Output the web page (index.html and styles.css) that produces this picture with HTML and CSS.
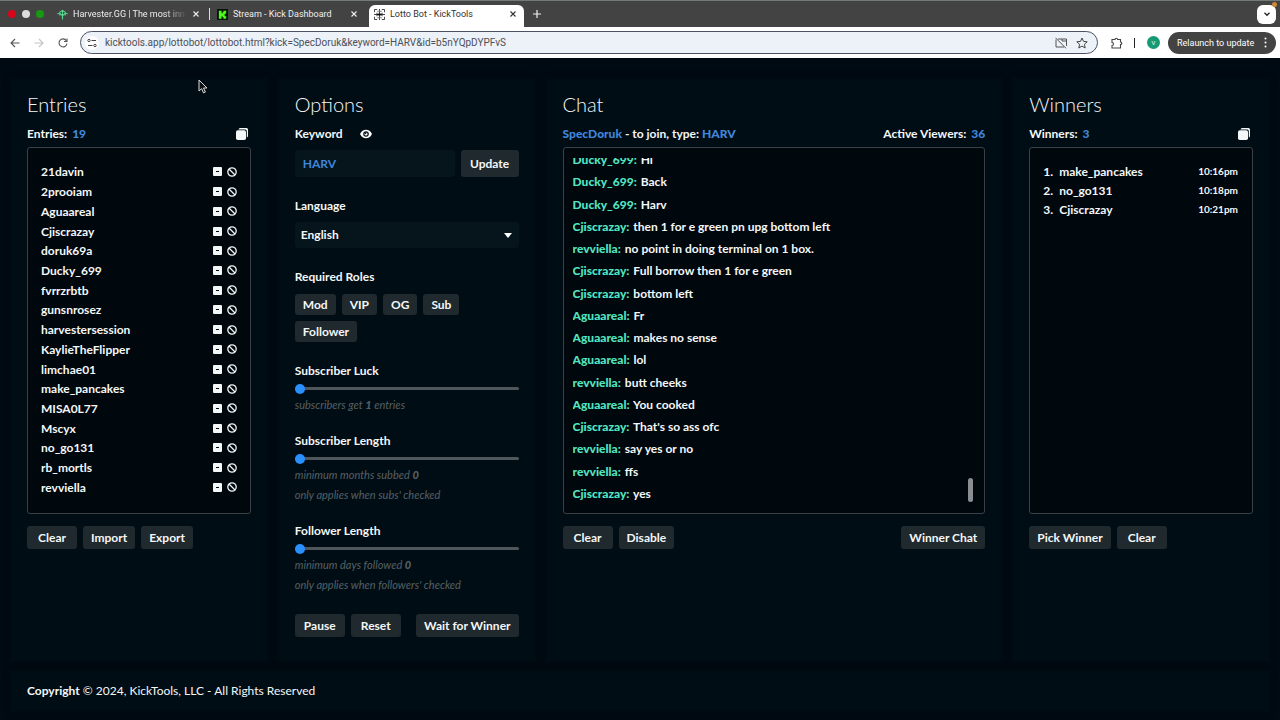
FILE: index.html
```html
<!DOCTYPE html>
<html lang="en">

<head>
    <meta charset="UTF-8">
    <meta name="viewport" content="width=device-width, initial-scale=1">
    <title>Lotto Bot - KickTools</title>
    <link rel="stylesheet" href="styles.css">
</head>

<body>
    <svg class="defs" width="0" height="0" aria-hidden="true">
        <symbol id="close" viewBox="0 0 8 8"><path d="M1.500 1.500l5 5M6.500 1.500l-5 5" fill="none" stroke="currentColor" stroke-width="1.100"/></symbol>
        <symbol id="copy" viewBox="0 0 12 12"><path d="M4 0h6.500a1.500 1.500 0 0 1 1.500 1.500V8a1.500 1.500 0 0 1-1.200 1.500V3a1.500 1.500 0 0 0-1.500-1.500H2.600A1.500 1.500 0 0 1 4 0z" fill="currentColor"/><rect y="2.200" width="10" height="9.800" rx="1.800" fill="currentColor"/></symbol>
        <symbol id="minus" viewBox="0 0 9 9"><rect width="9" height="9" rx="1" fill="currentColor"/><path d="M3 4.500h3" stroke="#00070d"/></symbol>
        <symbol id="ban" viewBox="0 0 10 10"><circle cx="5" cy="5" r="4.200" fill="none" stroke="currentColor" stroke-width="1.300"/><path d="M2 2l6 6" stroke="currentColor" stroke-width="1.300"/></symbol>
    </svg>

    <header class="browser">
        <div class="tabstrip">
            <div class="lights"><span class="red"></span><span class="white"></span><span class="green"></span></div>
            <div class="tab">
                <svg class="favicon" viewBox="0 0 12 12"><path d="M6 1.500v10M.5 5.500L6 1.500l5.500 4M3 7V4.500L6 7.500l3-3V7" fill="none" stroke="#55d68c" stroke-width="1.200"/></svg>
                <span class="tab-title fade">Harvester.GG | The most inno</span>
                <button class="icon-btn" aria-label="Close tab"><svg width="8" height="8"><use href="#close"/></svg></button>
            </div>
            <div class="tab divided">
                <svg class="favicon" viewBox="0 0 12 12"><rect width="12" height="12" fill="#041405"/><path d="M2 2h3v2.500h1V3.500h1V2h3v3H9v1H8v1h1v1h1v2.500H7V9H6V8H5v2.500H2z" fill="#4dfb1b"/></svg>
                <span class="tab-title">Stream - Kick Dashboard</span>
                <button class="icon-btn" aria-label="Close tab"><svg width="8" height="8"><use href="#close"/></svg></button>
            </div>
            <div class="tab active">
                <svg class="favicon" viewBox="0 0 12 12"><path d="M.5 3.500v-3h3M8.500.5h3v3M.5 8.500v3h3M8.500 11.500h3v-3M6 0v12M0 6h12" fill="none" stroke="#333"/><path d="M3 4v4M9 4v4M3.500 2.500h5M3.500 9.500h5" fill="none" stroke="#777"/><path d="M3 6h6" stroke="#111" stroke-width="2"/></svg>
                <span class="tab-title">Lotto Bot - KickTools</span>
                <button class="icon-btn" aria-label="Close tab"><svg width="8" height="8"><use href="#close"/></svg></button>
            </div>
            <button class="icon-btn new-tab" aria-label="New tab"><svg width="8" height="8" viewBox="0 0 8 8"><path d="M4 0v8M0 4h8" stroke="currentColor" stroke-width="1.200"/></svg></button>
            <button class="tab-search" aria-label="Search tabs"><svg width="8" height="8" viewBox="0 0 8 8"><path d="M1.500 2.800L4 5.300l2.500-2.500" fill="none" stroke="#222" stroke-width="1.300"/></svg></button>
            <span class="notice"></span>
        </div>
        <div class="toolbar">
            <button class="icon-btn nav" aria-label="Back"><svg width="10" height="10" viewBox="0 0 10 10"><path d="M9.500 5H1M5 1L1 5l4 4" fill="none" stroke="#555" stroke-width="1.100"/></svg></button>
            <button class="icon-btn nav" aria-label="Forward"><svg width="10" height="10" viewBox="0 0 10 10"><path d="M.5 5H9M5 1l4 4-4 4" fill="none" stroke="#c4c4c4" stroke-width="1.100"/></svg></button>
            <button class="icon-btn nav" aria-label="Reload"><svg width="10" height="10" viewBox="0 0 10 10"><path d="M8.300 2.600A4 4 0 1 0 9 5.500M9 .5v3H6" fill="none" stroke="#555" stroke-width="1.100"/></svg></button>
            <div class="address">
                <span class="site"><svg width="10" height="10" viewBox="0 0 10 10"><path d="M4.500 2.500H9M1 7.500h4.500" stroke="#444" stroke-width="1.100"/><circle cx="2" cy="2.500" r="1.200" fill="none" stroke="#444"/><circle cx="8" cy="7.500" r="1.200" fill="none" stroke="#444"/></svg></span>
                <input class="url" type="text" aria-label="Address" value="kicktools.app/lottobot/lottobot.html?kick=SpecDoruk&amp;keyword=HARV&amp;id=b5nYQpDYPFvS">
                <svg width="12" height="12" viewBox="0 0 12 12"><path d="M3 2h8.500v7M9 10H1V2.500M.5.800l10.500 10.500M7 2v2h4" fill="none" stroke="#555"/></svg>
                <svg width="12" height="12" viewBox="0 0 12 12"><path d="M6 1l1.500 3.400 3.700.4-2.800 2.500.8 3.700L6 9.100 2.800 11l.8-3.700L.8 4.800l3.700-.4z" fill="none" stroke="#444"/></svg>
            </div>
            <svg class="puzzle" width="12" height="12" viewBox="0 0 12 12"><path d="M1 2.500h3a1.300 1.300 0 0 1 2.600 0H9.500V5a1.300 1.300 0 0 1 0 2.600v3.400H1V8.500a1.500 1.500 0 0 0 0-3z" fill="none" stroke="#444" stroke-width="1.100"/></svg>
            <span class="bar"></span>
            <span class="avatar">V</span>
            <button class="relaunch">Relaunch to update <svg width="3" height="11" viewBox="0 0 3 11"><g fill="#fff"><circle cx="1.500" cy="1.500" r="1"/><circle cx="1.500" cy="5.500" r="1"/><circle cx="1.500" cy="9.500" r="1"/></g></svg></button>
        </div>
    </header>

    <main class="panels">
        <section class="panel">
            <h2>Entries</h2>
            <div class="subhead">
                <span>Entries: <b class="count">19</b></span>
                <button class="icon-btn copy" aria-label="Copy entries"><svg width="12" height="12"><use href="#copy"/></svg></button>
            </div>
            <ul class="box entries" id="entries"></ul>
            <div class="actions">
                <button class="btn">Clear</button>
                <button class="btn">Import</button>
                <button class="btn">Export</button>
            </div>
        </section>

        <section class="panel">
            <h2>Options</h2>
            <div class="field">
                <div class="label-row">
                    <label for="keyword">Keyword</label>
                    <button class="icon-btn" aria-label="Hide keyword"><svg width="12" height="10" viewBox="0 0 12 10"><path d="M0 5C1.500 2 3.500.8 6 .8S10.500 2 12 5C10.500 8 8.500 9.200 6 9.200S1.500 8 0 5z" fill="#fff"/><circle cx="6" cy="5" r="2.800" fill="#010e15"/><circle cx="6" cy="5" r="1.600" fill="#fff"/><circle cx="5.500" cy="4.400" r=".8" fill="#010e15"/></svg></button>
                </div>
                <div class="keyword-row">
                    <input class="text" id="keyword" type="text" value="HARV">
                    <button class="btn">Update</button>
                </div>
            </div>
            <div class="field">
                <label for="language">Language</label>
                <div class="select">
                    <select id="language">
                        <option>English</option>
                    </select>
                    <svg width="8" height="5" viewBox="0 0 8 5"><path d="M0 0h8L4 5z" fill="#fff"/></svg>
                </div>
            </div>
            <div class="field">
                <span class="label">Required Roles</span>
                <div class="roles">
                    <button class="btn">Mod</button>
                    <button class="btn">VIP</button>
                    <button class="btn">OG</button>
                    <button class="btn">Sub</button>
                    <button class="btn">Follower</button>
                </div>
            </div>
            <div class="slider">
                <label for="luck">Subscriber Luck</label>
                <input id="luck" type="range" min="1" max="10" value="1">
                <p>subscribers get <b>1</b> entries</p>
            </div>
            <div class="slider">
                <label for="subLength">Subscriber Length</label>
                <input id="subLength" type="range" min="0" max="12" value="0">
                <p>minimum months subbed <b>0</b></p>
                <p>only applies when subs' checked</p>
            </div>
            <div class="slider">
                <label for="followLength">Follower Length</label>
                <input id="followLength" type="range" min="0" max="90" value="0">
                <p>minimum days followed <b>0</b></p>
                <p>only applies when followers' checked</p>
            </div>
            <div class="actions options-actions">
                <button class="btn">Pause</button>
                <button class="btn">Reset</button>
                <button class="btn last">Wait for Winner</button>
            </div>
        </section>

        <section class="panel">
            <h2>Chat</h2>
            <div class="subhead">
                <span><b class="name">SpecDoruk</b> - to join, type: <b class="name">HARV</b></span>
                <span>Active Viewers: <b class="count">36</b></span>
            </div>
            <div class="box chat">
                <div class="messages">
                    <ul id="messages"></ul>
                </div>
                <span class="thumb"></span>
            </div>
            <div class="actions">
                <button class="btn">Clear</button>
                <button class="btn">Disable</button>
                <button class="btn last">Winner Chat</button>
            </div>
        </section>

        <section class="panel">
            <h2>Winners</h2>
            <div class="subhead">
                <span>Winners: <b class="count">3</b></span>
                <button class="icon-btn copy" aria-label="Copy winners"><svg width="12" height="12"><use href="#copy"/></svg></button>
            </div>
            <ol class="box winners">
                <li><span>1.</span> make_pancakes <time>10:16pm</time></li>
                <li><span>2.</span> no_go131 <time>10:18pm</time></li>
                <li><span>3.</span> Cjiscrazay <time>10:21pm</time></li>
            </ol>
            <div class="actions">
                <button class="btn">Pick Winner</button>
                <button class="btn">Clear</button>
            </div>
        </section>
    </main>

    <footer class="footer"><b>Copyright</b> © 2024, KickTools, LLC - All Rights Reserved</footer>

    <svg class="pointer" width="10" height="15" viewBox="0 0 10 15"><path d="M1 1v11l2.600-2.300 1.900 4.200 1.900-.9-1.900-4H9z" fill="#111" stroke="#ddd"/></svg>

    <script src="script.js"></script>
</body>

</html>
```
FILE: styles.css
```css
* {
    box-sizing: border-box;
}
body {
    margin: 0;
    min-height: 100vh;
    display: flex;
    flex-direction: column;
    background: #000a12;
    color: #f4f7f8;
    font: 700 12px/20px Lato, sans-serif;
}
h2, p, ul, ol {
    margin: 0;
    padding: 0;
    list-style: none;
}
button, input, select {
    font: inherit;
    color: inherit;
    border: 0;
    margin: 0;
    padding: 0;
    background: none;
}
.defs {
    position: absolute;
}
.icon-btn {
    display: flex;
    align-items: center;
    justify-content: center;
    flex: none;
}

/* browser */
.browser {
    font: 400 9px/12px Roboto, sans-serif;
}
.tabstrip {
    position: relative;
    display: flex;
    align-items: center;
    height: 27px;
    padding: 0 4px 0 8px;
    background: #434343;
    border-top: 1px solid #737a78;
    color: #eee;
}
.lights {
    display: flex;
    gap: 6px;
    width: 44px;
}
.lights span {
    width: 8px;
    height: 8px;
    border-radius: 50%;
}
.red {
    background: #d8061b;
}
.white {
    background: #dcdcdc;
}
.green {
    background: #159a12;
}
.tab {
    display: flex;
    align-items: center;
    gap: 5px;
    width: 157px;
    padding: 0 9px 0 5px;
}
.favicon {
    width: 11px;
    height: 11px;
    flex: none;
}
.tab-title {
    flex: 1;
    overflow: hidden;
    white-space: nowrap;
}
.fade {
    mask-image: linear-gradient(to right, #000 80%, transparent);
}
.divided {
    width: 160px;
    border-left: 1px solid #ddd;
    height: 12px;
    padding: 0 11px 0 7px;
}
.active {
    align-self: flex-end;
    width: 155px;
    height: 22px;
    padding: 0 7px 4px 5px;
    background: #fff;
    border-radius: 6px 6px 0 0;
    color: #333;
}
.new-tab {
    margin-left: 9px;
}
.tab-search {
    display: flex;
    align-items: center;
    justify-content: center;
    width: 19px;
    height: 19px;
    margin-left: auto;
    border-radius: 6px;
    background: #fff;
}
.notice {
    position: absolute;
    top: 1px;
    right: 3px;
    width: 5px;
    height: 5px;
    border-radius: 50%;
    background: #c98a3a;
}
.toolbar {
    display: flex;
    align-items: center;
    height: 31px;
    padding: 0 4px 0 10px;
    background: #fff;
}
.nav {
    width: 10px;
    margin-right: 14px;
}
.address {
    display: flex;
    align-items: center;
    gap: 9px;
    flex: 1;
    height: 23px;
    margin-left: -2px;
    padding: 0 9px 0 4px;
    border: 1px solid #4a5361;
    border-radius: 12px;
    background: #edf1f8;
}
.site {
    display: flex;
    align-items: center;
    justify-content: center;
    width: 14px;
    height: 14px;
    margin-right: -3px;
    border-radius: 50%;
    background: #fff;
}
.url {
    flex: 1;
    font-size: 10px;
    color: #4c5058;
    outline: none;
}
.puzzle {
    margin-left: 13px;
}
.bar {
    width: 1px;
    height: 10px;
    margin: 0 12px 0 11px;
    background: #222;
}
.avatar {
    width: 13px;
    height: 13px;
    border-radius: 50%;
    background: #169a74;
    color: #fff;
    font-size: 6px;
    line-height: 13px;
    text-align: center;
}
.relaunch {
    display: flex;
    align-items: center;
    justify-content: space-between;
    width: 108px;
    height: 22px;
    margin-left: 8px;
    padding: 0 9px;
    border-radius: 11px;
    background: #434343;
    color: #fff;
}

/* panels */
.panels {
    flex: 1;
    display: grid;
    grid-template-columns: 9fr 9fr 16fr 9fr;
    gap: 12px;
    padding: 21px 11px 10px;
}
.panel {
    min-width: 0;
    padding: 12px 16px 24px;
    background: #010d14;
    box-shadow: 0 0 6px #010d14;
}
h2 {
    margin-bottom: 7px;
    font-size: 20px;
    font-weight: 300;
    line-height: 26px;
}
.subhead {
    display: flex;
    justify-content: space-between;
    margin-bottom: 3px;
    white-space: pre;
}
.count, .name {
    color: #3f86dc;
}
.count {
    margin-left: 2px;
}
.copy {
    margin-right: 3px;
}
.box {
    height: 51vh;
    border: 1px solid #3b4045;
    border-radius: 3px;
    background: #00070d;
}
.entries {
    display: flex;
    flex-direction: column;
    padding: 14px 13px 16px;
}
.entries li {
    flex: 1;
    display: flex;
    align-items: center;
    gap: 5px;
}
.entries li span {
    flex: 1;
    line-height: 19px;
}
.chat {
    position: relative;
    padding: 10px 10px 8px 9px;
}
.messages {
    display: flex;
    flex-direction: column;
    justify-content: flex-end;
    height: 100%;
    overflow: hidden;
}
.messages ul {
    display: flex;
    flex-direction: column;
    flex: none;
    height: 356px;
}
.messages li {
    flex: 1;
    line-height: 22px;
}
.messages b {
    margin-right: 1px;
    color: #52e5c1;
}
.thumb {
    position: absolute;
    right: 11px;
    bottom: 11px;
    width: 5px;
    height: 24px;
    border-radius: 3px;
    background: #8b8e91;
}
.winners {
    padding: 14px 14px 14px 13px;
}
.winners li {
    display: flex;
    line-height: 19px;
}
.winners span {
    width: 16px;
}
.winners time {
    margin-left: auto;
    font-size: 10px;
}

/* controls */
.actions {
    display: flex;
    gap: 6px;
    margin-top: 12px;
}
.btn {
    height: 23px;
    padding: 0 8px;
    border-radius: 3px;
    background: #20292e;
    white-space: nowrap;
    line-height: 21px;
}
.actions .btn {
    min-width: 50px;
}
.last {
    margin-left: auto;
}
.field {
    margin-bottom: 19px;
}
label, .label {
    display: block;
}
.label-row {
    display: flex;
    gap: 17px;
}
.keyword-row, .roles, .select {
    display: flex;
    gap: 6px;
    margin-top: 6px;
}
.keyword-row .btn {
    width: 58px;
    height: 27px;
}
.text {
    flex: 1;
    min-width: 0;
    padding: 0 8px;
    border-radius: 3px;
    background: #06151b;
    color: #3f86dc;
}
.select {
    position: relative;
}
.select select {
    appearance: none;
    width: 100%;
    height: 26px;
    padding: 0 6px;
    border-radius: 3px;
    background: #06151b;
}
.select svg {
    position: absolute;
    right: 7px;
    top: 11px;
    pointer-events: none;
}
.roles {
    flex-wrap: wrap;
    margin-top: 7px;
}
.roles .btn {
    height: 21px;
}
.slider {
    margin-bottom: 16px;
}
.slider input {
    appearance: none;
    display: block;
    width: 100%;
    height: 14px;
}
.slider input::-webkit-slider-runnable-track {
    height: 3px;
    border-radius: 2px;
    background: #50575a;
}
.slider input::-webkit-slider-thumb {
    appearance: none;
    width: 10px;
    height: 10px;
    margin-top: -3px;
    border-radius: 50%;
    background: #2a8fff;
}
.slider p {
    color: #566065;
    font-size: 11px;
    font-style: italic;
    font-weight: 400;
}
.slider b {
    font-weight: 900;
}
.options-actions {
    margin-top: 19px;
}
.footer {
    margin: 0 11px 9px;
    padding: 10px 16px;
    background: #010d14;
    box-shadow: 0 0 6px #010d14;
    font-weight: 400;
}
.pointer {
    position: absolute;
    left: 198px;
    top: 79px;
}
```
FILE: script.js
```js
var entries = ["21davin", "2prooiam", "Aguaareal", "Cjiscrazay", "doruk69a", "Ducky_699",
    "fvrrzrbtb", "gunsnrosez", "harvestersession", "KaylieTheFlipper", "limchae01",
    "make_pancakes", "MISA0L77", "Mscyx", "no_go131", "rb_mortls", "revviella"];

var messages = [
    ["Ducky_699", "Hi"],
    ["Ducky_699", "Back"],
    ["Ducky_699", "Harv"],
    ["Cjiscrazay", "then 1 for e green pn upg bottom left"],
    ["revviella", "no point in doing terminal on 1 box."],
    ["Cjiscrazay", "Full borrow then 1 for e green"],
    ["Cjiscrazay", "bottom left"],
    ["Aguaareal", "Fr"],
    ["Aguaareal", "makes no sense"],
    ["Aguaareal", "lol"],
    ["revviella", "butt cheeks"],
    ["Aguaareal", "You cooked"],
    ["Cjiscrazay", "That's so ass ofc"],
    ["revviella", "say yes or no"],
    ["revviella", "ffs"],
    ["Cjiscrazay", "yes"]
];

document.getElementById("entries").innerHTML = entries.map(function (name) {
    return '<li><span>' + name + '</span>' +
        '<button class="icon-btn" aria-label="Remove"><svg width="9" height="9"><use href="#minus"/></svg></button>' +
        '<button class="icon-btn" aria-label="Ban"><svg width="10" height="10"><use href="#ban"/></svg></button></li>';
}).join("");

document.getElementById("messages").innerHTML = messages.map(function (m) {
    return "<li><b>" + m[0] + ":</b> " + m[1] + "</li>";
}).join("");
```
